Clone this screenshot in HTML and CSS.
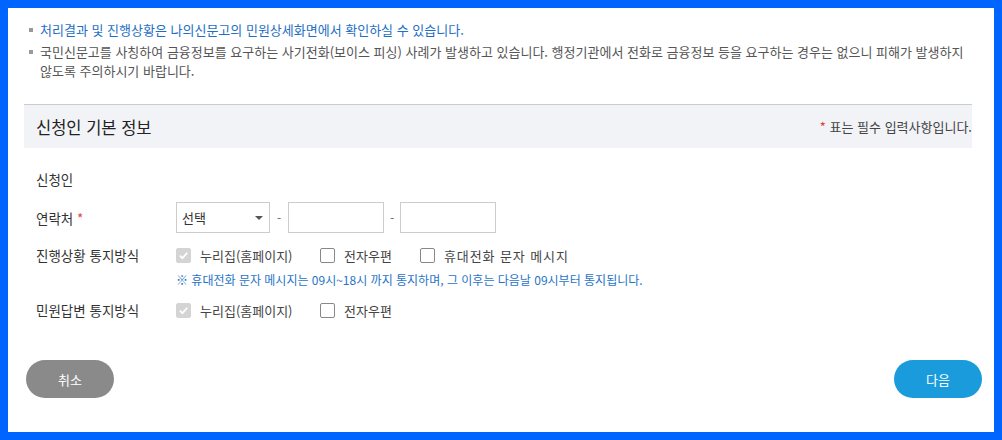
FILE: index.html
```html
<!DOCTYPE html>
<html lang="ko">
<head>
<meta charset="utf-8">
<title>신청인 기본 정보</title>
<link rel="stylesheet" href="styles.css">
</head>
<body>
<div class="page">
  <ul class="notes">
    <li class="note-blue">처리결과 및 진행상황은 나의신문고의 민원상세화면에서 확인하실 수 있습니다.</li>
    <li>국민신문고를 사칭하여 금융정보를 요구하는 사기전화(보이스 피싱) 사례가 발생하고 있습니다. 행정기관에서 전화로 금융정보 등을 요구하는 경우는 없으니 피해가 발생하지 않도록 주의하시기 바랍니다.</li>
  </ul>

  <div class="section-head">
    <h2 class="section-title">신청인 기본 정보</h2>
    <p class="req-note"><span class="star">*</span> 표는 필수 입력사항입니다.</p>
  </div>

  <div class="form">
    <div class="row row-name">
      <div class="label">신청인</div>
      <div class="field"></div>
    </div>
    <div class="row row-phone">
      <div class="label">연락처 <span class="star">*</span></div>
      <div class="field">
        <div class="select"><span>선택</span><span class="caret"></span></div>
        <span class="dash">-</span>
        <div class="input"></div>
        <span class="dash dash-2">-</span>
        <div class="input"></div>
      </div>
    </div>
    <div class="row row-check">
      <div class="label">진행상황 통지방식</div>
      <div class="field">
        <label class="opt opt-1"><span class="box checked"><svg viewBox="0 0 16 16" width="16" height="16"><path d="M3.5 8.2 L6.7 11.2 L12.6 4.6" fill="none" stroke="#fff" stroke-width="2.2"/></svg></span>누리집(홈페이지)</label>
        <label class="opt opt-2"><span class="box"></span>전자우편</label>
        <label class="opt opt-3"><span class="box"></span>휴대전화 문자 메시지</label>
      </div>
    </div>
    <div class="row row-info">
      <div class="label"></div>
      <div class="field info">※ 휴대전화 문자 메시지는 09시~18시 까지 통지하며, 그 이후는 다음날 09시부터 통지됩니다.</div>
    </div>
    <div class="row row-check2">
      <div class="label">민원답변 통지방식</div>
      <div class="field">
        <label class="opt opt-1"><span class="box checked"><svg viewBox="0 0 16 16" width="16" height="16"><path d="M3.5 8.2 L6.7 11.2 L12.6 4.6" fill="none" stroke="#fff" stroke-width="2.2"/></svg></span>누리집(홈페이지)</label>
        <label class="opt opt-2"><span class="box"></span>전자우편</label>
      </div>
    </div>
  </div>

  <div class="actions">
    <button class="btn btn-cancel">취소</button>
    <button class="btn btn-next">다음</button>
  </div>
</div>
</body>
</html>
```

FILE: styles.css
```css
* { box-sizing: border-box; }
html, body { margin: 0; padding: 0; }
body {
  background: #0064ff;
  font-family: "Noto Sans CJK KR", "Noto Sans", sans-serif;
  color: #333;
}
.page {
  margin: 8px;
  height: 424px;
  background: #fff;
  padding: 12px 22px 0 16px;
  position: relative;
}
.notes {
  list-style: none;
  margin: 0;
  padding: 0 0 0 16px;
  font-size: 13px;
  line-height: 19px;
  color: #555;
}
.notes li { position: relative; margin-bottom: 3px; }
.notes li::before {
  content: "";
  position: absolute;
  left: -11px;
  top: 8px;
  width: 4px;
  height: 4px;
  background: #999;
}
.notes .note-blue { color: #1d6fc4; }

.section-head {
  margin-top: 24px;
  border-top: 1px solid #c9ccd1;
  background: #f2f3f7;
  height: 44px;
  display: flex;
  align-items: center;
  justify-content: space-between;
  padding: 0 0 0 12px;
}
.section-title {
  margin: 0;
  font-size: 16.5px;
  font-weight: normal;
  color: #222;
}
.req-note {
  margin: 0;
  font-size: 13px;
  color: #444;
}
.star { color: #e23c3c; }

.form { padding: 19px 0 0 12px; }
.row { display: flex; align-items: center; }
.label { width: 140px; font-size: 13.5px; color: #333; flex: none; }
.field { display: flex; align-items: center; }
.row-name { height: 24px; }
.row-phone { height: 31px; margin-top: 11px; }
.row-check { height: 20px; margin-top: 12px; }
.row-info { height: 16px; margin-top: 6px; }
.row-check2 { height: 20px; margin-top: 13px; }

.select {
  width: 94px;
  height: 31px;
  border: 1px solid #ccc;
  display: flex;
  align-items: center;
  justify-content: space-between;
  padding: 0 0 0 5px;
  font-size: 13px;
  color: #333;
}
.caret {
  width: 0; height: 0;
  border-left: 4px solid transparent;
  border-right: 4px solid transparent;
  border-top: 4px solid #555;
  margin-right: 6px;
}
.dash { width: 18px; text-align: center; font-size: 12px; color: #666; }
.dash-2 { width: 16px; }
.input { width: 96px; height: 31px; border: 1px solid #ccc; }

.opt {
  display: flex;
  align-items: center;
  font-size: 13px;
  color: #444;
  white-space: nowrap;
}
.opt-1 { width: 144px; }
.opt-2 { width: 100px; }
.opt-3 { letter-spacing: 0.9px; }
.box {
  width: 15px;
  height: 15px;
  border: 1px solid #888;
  border-radius: 2px;
  margin-right: 9px;
  display: flex;
  align-items: center;
  justify-content: center;
  background: #fff;
  flex: none;
}
.box.checked { background: #d4d4d4; border-color: #d4d4d4; }
.box svg { width: 13px; height: 13px; }
.info { font-size: 12px; color: #1f74c8; white-space: nowrap; }

.actions {
  position: absolute;
  left: 18px;
  right: 12px;
  top: 352px;
  display: flex;
  justify-content: space-between;
}
.btn {
  width: 88px;
  height: 38px;
  border: none;
  border-radius: 19px;
  color: #fff;
  font-family: inherit;
  font-size: 13px;
}
.btn-cancel { background: #8a8a8a; }
.btn-next { background: #1a9bdc; }
```
